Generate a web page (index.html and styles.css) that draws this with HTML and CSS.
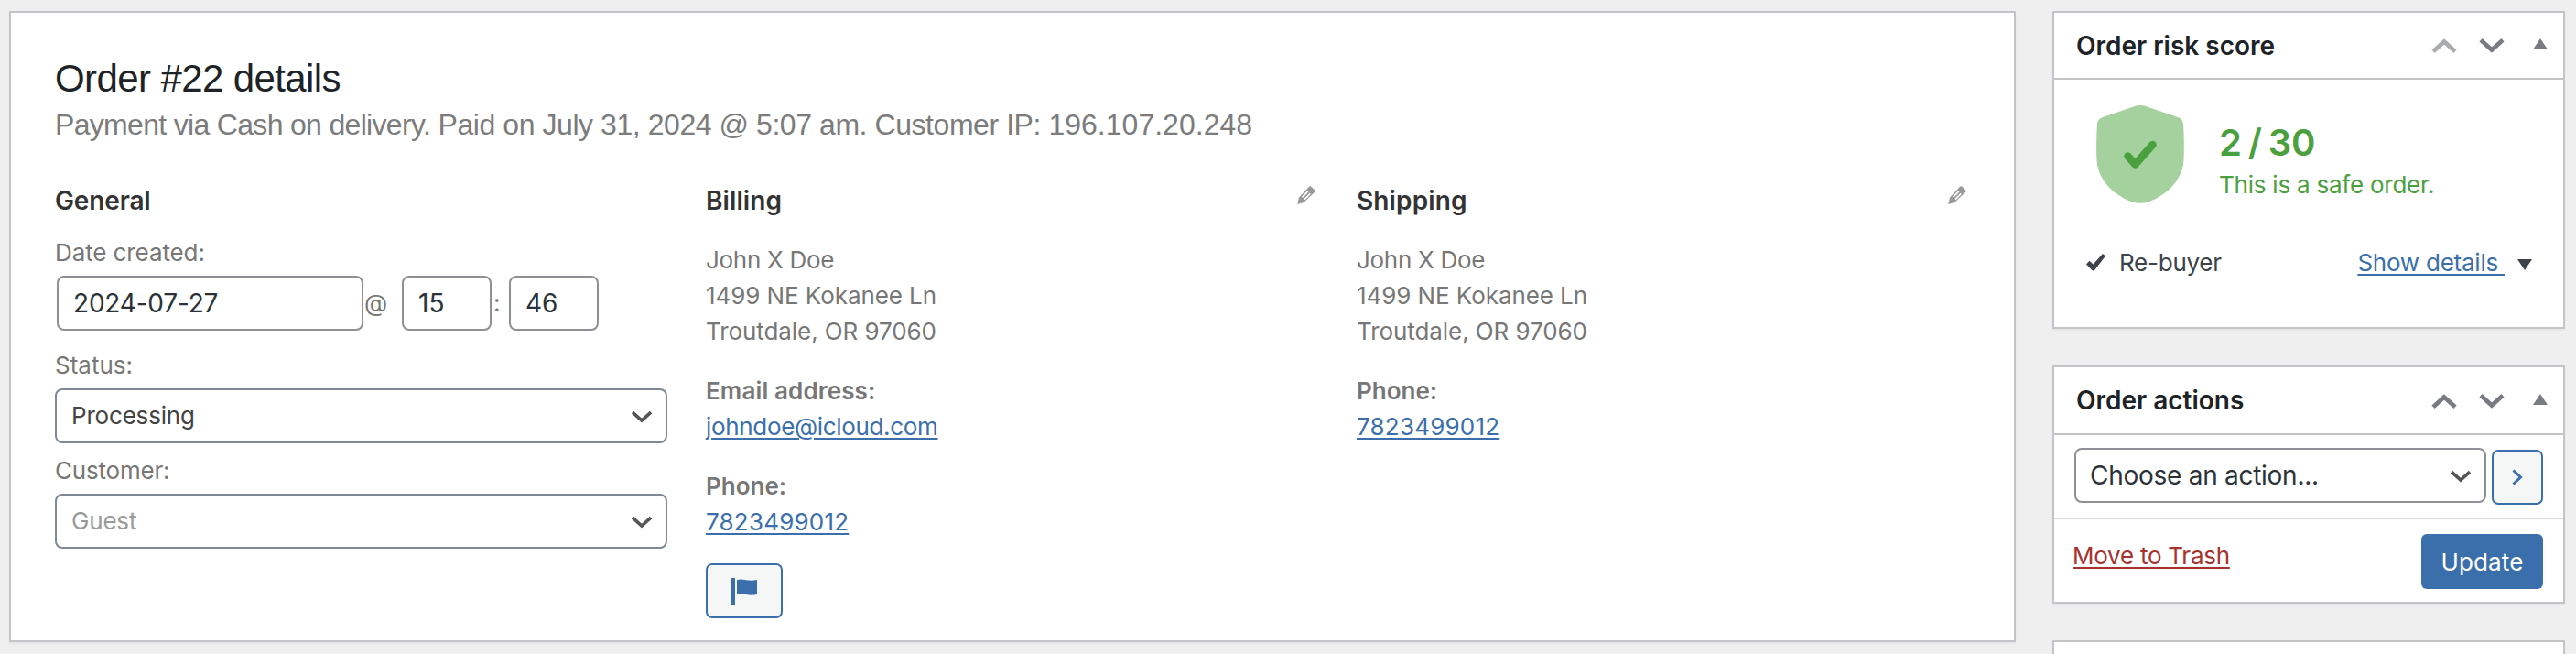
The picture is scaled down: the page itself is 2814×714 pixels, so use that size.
FILE: index.html
```
<!DOCTYPE html>
<html lang="en">
<head>
<meta charset="utf-8">
<title>Order #22</title>
<link rel="stylesheet" href="styles.css">
</head>
<body>
<div class="page">
  <main class="panel order">
    <h1 class="order-title">Order #22 details</h1>
    <p class="order-meta"><span class="meta-payment">Payment via Cash on delivery.</span> Paid on July 31, 2024 @ 5:07 am. Customer IP: <span class="meta-ip">196.107.20.248</span></p>
    <div class="columns">
      <section class="column">
        <div class="column-head"><h2 class="heading heading-general">General</h2></div>
        <div class="label label-date">Date created:</div>
        <div class="date-row">
          <div class="input input-date">2024-07-27</div>
          <span class="at">@</span>
          <div class="input input-time">15</div>
          <span class="colon">:</span>
          <div class="input input-time">46</div>
        </div>
        <div class="label label-status">Status:</div>
        <div class="select">
          <span>Processing</span>
          <svg class="caret" viewBox="0 0 22 12"><path d="M1 1.200 11 10.200 21 1.200"/></svg>
        </div>
        <div class="label label-customer">Customer:</div>
        <div class="select select-empty">
          <span>Guest</span>
          <svg class="caret" viewBox="0 0 22 12"><path d="M1 1.200 11 10.200 21 1.200"/></svg>
        </div>
      </section>

      <section class="column">
        <div class="column-head">
          <h2 class="heading heading-billing">Billing</h2>
          <svg class="pencil" viewBox="0 0 20 20"><path fill-rule="evenodd" d="M13 .8Q14.200-.3 15.400.7L19.200 4.400Q20.200 5.600 19.200 6.800L7.200 18 .3 20 2 12.500ZM6.200 12.800 12.400 6.500 11.200 5.300 5 11.600ZM8.600 15.200 14.800 8.900 13.600 7.700 7.400 14Z"/></svg>
        </div>
        <div class="block">
          <div class="name">John X Doe</div>
          <div class="line">1499 NE Kokanee Ln</div>
          <div class="line">Troutdale, OR 97060</div>
        </div>
        <div class="block">
          <div class="strong strong-email">Email address:</div>
          <a class="link email">johndoe@icloud.com</a>
        </div>
        <div class="block">
          <div class="strong">Phone:</div>
          <a class="link phone">7823499012</a>
        </div>
        <div class="button flag-button">
          <svg class="flag" viewBox="0 0 28 30"><path d="M0 0H4V30H0ZM6 2Q11 1 16 2.300Q22 3.400 28 2V18Q22 19.400 16 18Q11 16.800 6 17.800Z"/></svg>
        </div>
      </section>

      <section class="column">
        <div class="column-head">
          <h2 class="heading heading-shipping">Shipping</h2>
          <svg class="pencil" viewBox="0 0 20 20"><path fill-rule="evenodd" d="M13 .8Q14.200-.3 15.400.7L19.200 4.400Q20.200 5.600 19.200 6.800L7.200 18 .3 20 2 12.500ZM6.200 12.800 12.400 6.500 11.200 5.300 5 11.600ZM8.600 15.200 14.800 8.900 13.600 7.700 7.400 14Z"/></svg>
        </div>
        <div class="block">
          <div class="name">John X Doe</div>
          <div class="line">1499 NE Kokanee Ln</div>
          <div class="line">Troutdale, OR 97060</div>
        </div>
        <div class="block">
          <div class="strong">Phone:</div>
          <a class="link phone">7823499012</a>
        </div>
      </section>
    </div>
  </main>

  <aside class="side">
    <section class="panel risk">
      <header class="panel-head">
        <h2 class="panel-title">Order risk score</h2>
        <svg class="move disabled" viewBox="0 0 28 16"><path d="M2 14.200 14 3.500 26 14.200"/></svg>
        <svg class="move" viewBox="0 0 28 16"><path d="M2 1.800 14 12.500 26 1.800"/></svg>
        <svg class="toggle" viewBox="0 0 16 12"><path d="M8 0 16 12H0Z"/></svg>
      </header>
      <div class="score-row">
        <svg class="shield" viewBox="0 0 96 107">
          <path class="shield-body" d="M48 0C51 0 54 .8 57 2L89 13C93 14.600 94.800 17 95 21C96 35 96 50 95.600 58C95 80 79 97 57 105.500C51 107.200 45 107.200 39 105.500C17 97 1 80 .4 58C0 50 0 35 1 21C1.200 17 3 14.600 7 13L39 2C42 .8 45 0 48 0Z"/>
          <path class="shield-check" d="M34.500 55.500 42.500 64.500 61.500 43"/>
        </svg>
        <div class="score">
          <div class="score-value">2 / 30</div>
          <div class="score-note">This is a safe order.</div>
        </div>
      </div>
      <div class="risk-foot">
        <svg class="check" viewBox="0 0 21 19"><path d="M0 11.500 3.500 7.800 7.500 11.500 18 0 21 2.500 9.500 17.500Q7.800 19.500 6 17.800Z"/></svg>
        <span class="rebuyer">Re-buyer</span>
        <a class="link details">Show details&nbsp;</a>
        <svg class="expand" viewBox="0 0 16 12"><path d="M0 0H16L8 12Z"/></svg>
      </div>
    </section>

    <section class="panel actions">
      <header class="panel-head panel-head-actions">
        <h2 class="panel-title">Order actions</h2>
        <svg class="move" viewBox="0 0 28 16"><path d="M2 14.200 14 3.500 26 14.200"/></svg>
        <svg class="move" viewBox="0 0 28 16"><path d="M2 1.800 14 12.500 26 1.800"/></svg>
        <svg class="toggle" viewBox="0 0 16 12"><path d="M8 0 16 12H0Z"/></svg>
      </header>
      <div class="action-row">
        <div class="select action-select">
          <span>Choose an action...</span>
          <svg class="caret" viewBox="0 0 22 12"><path d="M1 1.200 11 10.200 21 1.200"/></svg>
        </div>
        <div class="button go-button">
          <svg class="arrow" viewBox="0 0 12 18"><path d="M1.500 1.500 9.500 9 1.500 16.500"/></svg>
        </div>
      </div>
      <footer class="action-foot">
        <a class="link trash">Move to Trash</a>
        <div class="update">Update</div>
      </footer>
    </section>

    <section class="panel next-panel"></section>
  </aside>
</div>
</body>
</html>
```
FILE: styles.css
```
* {
  box-sizing: border-box;
  margin: 0;
}

body {
  background: #efefef;
  color: #777;
  font: 400 26px/36px Inter, "Liberation Sans", sans-serif;
}

.page {
  display: flex;
  align-items: flex-start;
  gap: 40px;
  height: 714px;
  padding: 12px 12px 0 10px;
  overflow: hidden;
}

.panel {
  background: #fff;
  border: 2px solid #c3c3c8;
  box-shadow: 0 2px 2px rgba(0, 0, 0, 0.04);
}

svg {
  display: block;
  flex: none;
  overflow: visible;
}

/* Order details */
.order {
  width: 2192px;
  height: 689px;
  padding: 47px 48px 0;
}

.order-title {
  color: #1d2327;
  font: 400 42px/50px "Liberation Sans", Arial, sans-serif;
  letter-spacing: -0.6px;
}

.order-meta {
  margin-top: 3px;
  color: #7c7c7c;
  font: 400 32px/44px "Liberation Sans", Arial, sans-serif;
  letter-spacing: -0.44px;
}

.meta-payment { letter-spacing: -0.68px; }
.meta-ip { letter-spacing: 0.02px; }

.columns {
  display: grid;
  grid-template-columns: repeat(3, 666px);
  column-gap: 45px;
  margin-top: 41px;
}

.column-head {
  display: flex;
  justify-content: space-between;
  align-items: flex-start;
  height: 40px;
}

.heading {
  color: #333;
  font-size: 28px;
  font-weight: 600;
  line-height: 40px;
}

.heading-general { letter-spacing: -0.13px; }
.heading-billing { letter-spacing: 0.1px; }
.heading-shipping { letter-spacing: 0.13px; }

.pencil {
  width: 20px;
  height: 20px;
  margin-top: 4px;
  fill: #999;
}

.label-date {
  margin: 19px 0 7px;
  letter-spacing: -0.1px;
}

.label-status {
  margin: 20px 0 7px;
}

.label-customer {
  margin: 12px 0 7px;
  letter-spacing: -0.2px;
}

.date-row {
  display: flex;
  align-items: center;
  height: 60px;
  padding-left: 2px;
}

.input {
  height: 60px;
  padding-left: 16px;
  border: 2px solid #8f8f96;
  border-radius: 8px;
  color: #2c3338;
  font-size: 28px;
  line-height: 56px;
}

.input-date {
  width: 335px;
  letter-spacing: -0.2px;
}

.input-time {
  width: 98px;
}

.at {
  width: 42px;
  padding-left: 1px;
}

.colon {
  width: 19px;
  padding-left: 2px;
}

.select {
  display: flex;
  align-items: center;
  justify-content: space-between;
  width: 669px;
  height: 60px;
  padding: 0 15px 0 16px;
  border: 2px solid #7f8894;
  border-radius: 8px;
  color: #444;
  letter-spacing: -0.19px;
}

.select-empty span {
  color: #999;
}

.caret {
  width: 22px;
  height: 12px;
  margin-top: 2px;
  fill: none;
  stroke: #555;
  stroke-width: 3.6;
}

.block {
  margin-top: 26px;
  line-height: 39px;
}

.column-head + .block {
  margin-top: 25px;
}

.name { letter-spacing: -0.3px; }
.line { letter-spacing: -0.08px; }

.strong {
  font-weight: 600;
}

.strong-email { letter-spacing: 0.13px; }

.link {
  color: #3b6fab;
  text-decoration: underline;
  text-decoration-thickness: 2px;
  text-underline-offset: 3px;
}

.email { letter-spacing: -0.33px; }
.phone { letter-spacing: 0.2px; }

.button {
  display: flex;
  align-items: center;
  justify-content: center;
  height: 60px;
  border: 2px solid #3b6fab;
  border-radius: 7px;
  background: #f5f7f7;
}

.flag-button {
  width: 84px;
  margin-top: 26px;
}

.flag {
  width: 28px;
  height: 30px;
  margin-top: 2px;
  fill: #3b6fab;
}

/* Sidebar */
.side {
  display: flex;
  flex-direction: column;
  gap: 40px;
  width: 560px;
}

.panel-head {
  display: flex;
  align-items: center;
  height: 73px;
  padding: 0 17px 0 24px;
  border-bottom: 2px solid #c3c3c8;
}

.panel-head-actions {
  height: 74px;
}

.panel-title {
  flex: 1;
  color: #1d2327;
  font-size: 28px;
  font-weight: 600;
}

.move {
  width: 28px;
  height: 16px;
  margin: 1px 24px 0 0;
  fill: none;
  stroke: #787c82;
  stroke-width: 4.8;
}

.disabled {
  stroke: #a9abae;
}

.toggle {
  width: 16px;
  height: 12px;
  margin: -3px 0 0 7px;
  fill: #787c82;
}

.risk {
  height: 347px;
}

.score-row {
  display: flex;
  gap: 38px;
  height: 182px;
  padding: 28px 0 0 46px;
}

.shield {
  width: 96px;
  height: 107px;
}

.shield-body {
  fill: #a5d19e;
}

.shield-check {
  fill: none;
  stroke: #4aa03f;
  stroke-width: 8.5;
  stroke-linecap: round;
  stroke-linejoin: round;
}

.score {
  padding-top: 17px;
  color: #4aa03f;
}

.score-value {
  font-size: 40px;
  font-weight: 600;
  line-height: 48px;
  letter-spacing: -0.3px;
  word-spacing: -2.6px;
}

.score-note {
  margin-top: 4px;
  letter-spacing: -0.23px;
}

.risk-foot {
  display: flex;
  align-items: center;
  padding: 0 34px 0 35px;
  color: #3c434a;
}

.check {
  width: 21px;
  height: 19px;
  margin-top: -2px;
  fill: #3c434a;
}

.rebuyer {
  flex: 1;
  margin-left: 15px;
  letter-spacing: -0.25px;
}

.details {
  letter-spacing: -0.24px;
}

.expand {
  width: 16px;
  height: 12px;
  margin: 3px 0 0 14px;
  fill: #3c434a;
}

.actions {
  height: 260px;
}

.action-row {
  display: flex;
  gap: 6px;
  height: 92px;
  padding: 14px 22px 0;
  border-bottom: 2px solid #dcdcde;
}

.action-select {
  width: 450px;
  padding-left: 15px;
  border-color: #8f8f96;
  color: #2c3338;
  font-size: 28px;
  letter-spacing: -0.27px;
}

.go-button {
  width: 56px;
  margin-top: 2px;
}

.arrow {
  width: 12px;
  height: 18px;
  fill: none;
  stroke: #3b6fab;
  stroke-width: 3;
}

.action-foot {
  display: flex;
  justify-content: space-between;
  align-items: flex-start;
  padding: 16px 22px 0 20px;
}

.trash {
  margin-top: 6px;
  color: #a7332f;
  letter-spacing: -0.25px;
}

.update {
  width: 133px;
  height: 60px;
  padding-top: 1px;
  border-radius: 6px;
  background: #3b6fab;
  color: #fff;
  line-height: 60px;
  text-align: center;
  letter-spacing: 0.15px;
}

.next-panel {
  height: 60px;
}
```
